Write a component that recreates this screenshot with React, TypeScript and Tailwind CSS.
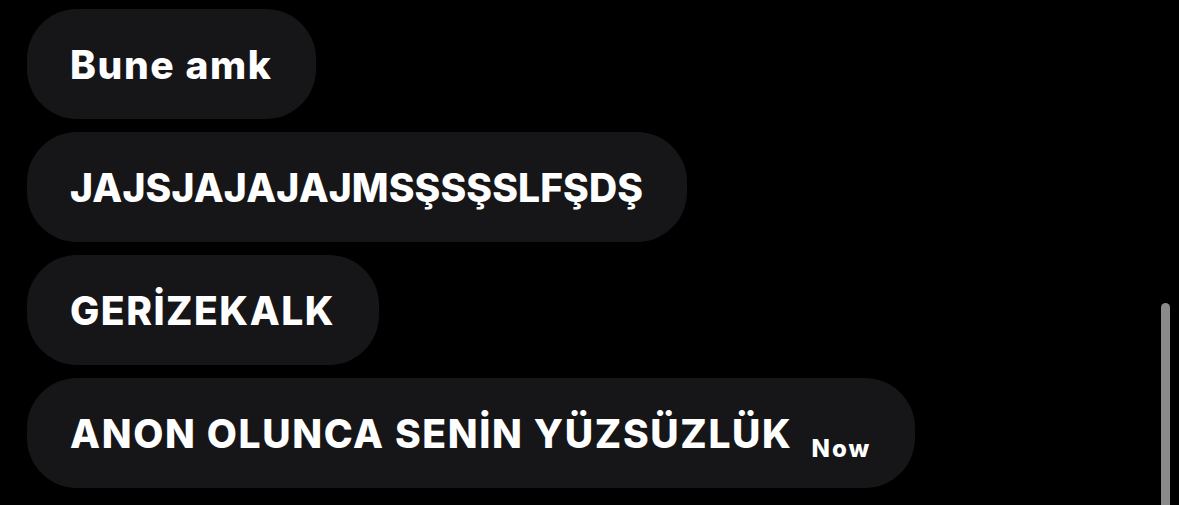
const messages = [
  { text: 'Bune amk', tracking: 'tracking-[1.6px]' },
  { text: 'JAJSJAJAJAJMSŞSŞSLFŞDŞ', tracking: 'tracking-[0.1px]' },
  { text: 'GERİZEKALK', tracking: 'tracking-[1.5px]' },
]

function Bubble({ text, tracking, time }: { text: string; tracking: string; time?: string }) {
  return (
    <div className="flex items-center h-[110px] rounded-[50px] bg-[#161618] pl-[43px] pr-[44px]">
      <span className={`text-[39px] font-extrabold leading-none text-white ${tracking}`}>{text}</span>
      {time && (
        <span className="ml-[19px] mt-[32px] text-[24px] font-extrabold leading-none text-white tracking-[2px]">{time}</span>
      )}
    </div>
  )
}

export default function App() {
  return (
    <div className="relative h-[505px] w-[1179px] overflow-hidden bg-black font-['Inter',sans-serif]">
      <div className="flex flex-col items-start gap-[13px] pl-[27px] pt-[9px]">
        {messages.map((m) => (
          <Bubble key={m.text} text={m.text} tracking={m.tracking} />
        ))}
        <Bubble text="ANON OLUNCA SENİN YÜZSÜZLÜK" tracking="tracking-[1.65px]" time="Now" />
      </div>
      {/* scrollbar */}
      <div className="absolute left-[1161px] top-[303px] h-[210px] w-[9px] rounded-full bg-[#8a8a8a]" />
    </div>
  )
}
